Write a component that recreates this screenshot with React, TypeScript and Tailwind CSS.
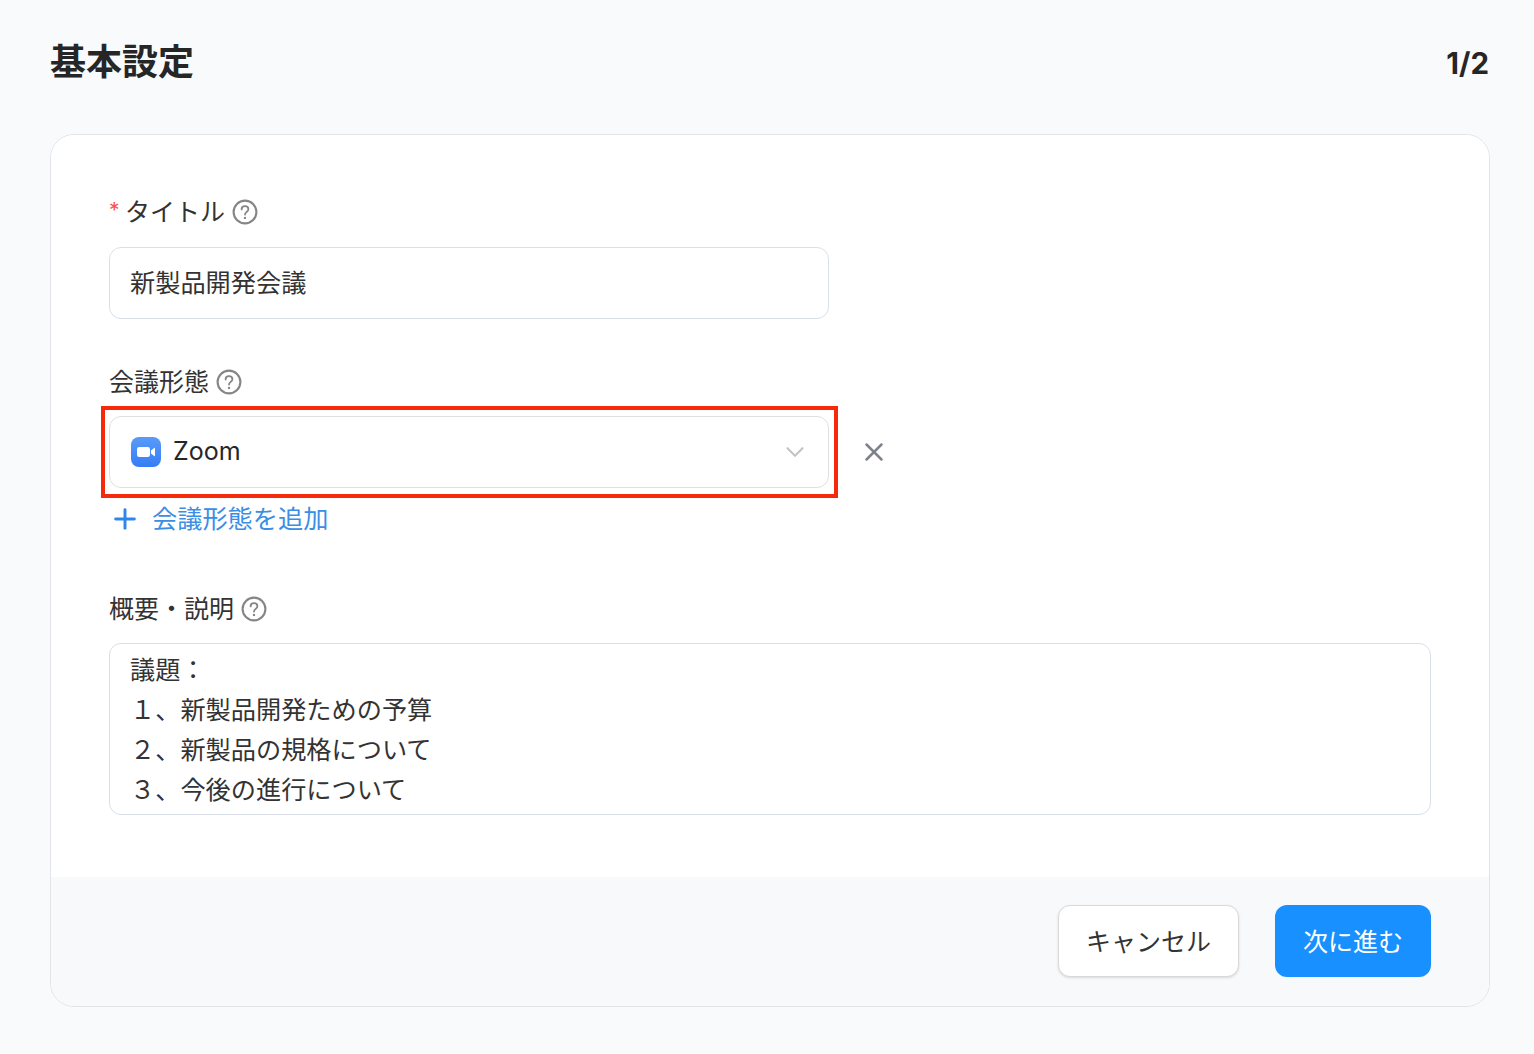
import { ChevronDown, Plus, X } from 'lucide-react';

function HelpIcon() {
  return (
    <svg width="26" height="26" viewBox="0 0 26 26" fill="none" className="shrink-0">
      <circle cx="13" cy="13" r="11.4" stroke="#858585" strokeWidth="2.1" />
      <path
        d="M9.6 10.4c0-1.9 1.5-3.2 3.4-3.2s3.4 1.2 3.4 3c0 2.6-3.4 2.8-3.4 5.4"
        stroke="#858585"
        strokeWidth="1.8"
        strokeLinecap="round"
      />
      <circle cx="13" cy="18.9" r="1.2" fill="#858585" />
    </svg>
  );
}

function ZoomLogo() {
  return (
    <svg width="30" height="30" viewBox="0 0 30 30" className="shrink-0">
      <defs>
        <linearGradient id="zoomBg" x1="0" y1="0" x2="0" y2="1">
          <stop offset="0" stopColor="#5a9bf8" />
          <stop offset="1" stopColor="#357df6" />
        </linearGradient>
      </defs>
      <rect width="30" height="30" rx="8" fill="url(#zoomBg)" />
      <rect x="6" y="10" width="13" height="10" rx="2.2" fill="#fff" />
      <path d="M20 13.6l3.2-2.6c.4-.3.8-.1.8.4v7.2c0 .5-.4.7-.8.4L20 16.4z" fill="#fff" />
    </svg>
  );
}

function FieldLabel({ text, required }: { text: string; required?: boolean }) {
  return (
    <div className="flex h-[36px] items-center gap-[7px] text-[25px] text-[#333]">
      {required && <span className="mb-[4px] w-[9px] text-[21px] leading-none text-[#ff4d4f]">*</span>}
      <span className="pt-[2px]">{text}</span>
      <HelpIcon />
    </div>
  );
}

export default function App() {
  return (
    <div
      className="flex h-[1054px] flex-col bg-[#f9fafb] pl-[50px] pr-[45px] text-[#333]"
      style={{ fontFamily: 'Inter, "Noto Sans CJK JP", sans-serif' }}
    >
      <div className="flex h-[134px] items-start justify-between pt-[38px]">
        <h1 className="text-[36px] font-bold leading-[48px] text-[#262626]">基本設定</h1>
        <span className="pt-[4px] text-[29.5px] font-bold leading-[42px] text-[#262626]">1/2</span>
      </div>

      <div className="mr-[-1px] flex h-[873px] flex-col overflow-hidden rounded-[24px] border border-[#e2e4e9] bg-white">
        <div className="flex h-[742px] flex-col bg-white pl-[58px] pr-[58px] pt-[59px]">
          <FieldLabel text="タイトル" required />
          <div className="mt-[17px] flex h-[72px] w-[720px] items-center rounded-[12px] border border-[#d9dfe8] pl-[20px] pt-[2px] text-[25.2px]">
            新製品開発会議
          </div>

          <div className="mt-[45px]">
            <FieldLabel text="会議形態" />
          </div>
          <div className="mt-[16px] flex items-center">
            <div className="relative flex h-[72px] w-[720px] items-center rounded-[12px] border border-[#e0e0e0] pl-[21px] pr-[18px]">
              <div className="pointer-events-none absolute bottom-[-11px] left-[-9px] right-[-10px] top-[-11px] border-4 border-[#f52a0c]" />
              <ZoomLogo />
              <span className="ml-[12px] flex-1 text-[25px] text-[#262626]">Zoom</span>
              <ChevronDown size={30} strokeWidth={1.7} className="text-[#c4c4c4]" />
            </div>
            <X size={30} strokeWidth={2} className="ml-[30px] text-[#7d828c]" />
          </div>
          <div className="mt-[13px] flex h-[36px] items-center text-[25.2px] text-[#3a8ee6]">
            <Plus size={32} strokeWidth={2.2} className="text-[#2f86ea]" />
            <span className="ml-[11px] pt-[1px]">会議形態を追加</span>
          </div>

          <div className="mt-[54px]">
            <FieldLabel text="概要・説明" />
          </div>
          <div className="mt-[16px] h-[172px] overflow-hidden rounded-[12px] border border-[#d9dfe8] pl-[20px] pt-[6px] text-[25.2px] leading-[40px]">
            <div>議題：</div>
            <div>１、新製品開発ための予算</div>
            <div>２、新製品の規格について</div>
            <div>３、今後の進行について</div>
          </div>
        </div>

        <div className="flex flex-1 items-start justify-end gap-[36px] bg-[#f8f9fb] pr-[58px] pt-[28px]">
          <button className="h-[72px] w-[181px] rounded-[12px] border border-[#d9d9d9] bg-white pt-[3px] text-[25px] text-[#333] shadow-sm">
            キャンセル
          </button>
          <button className="h-[72px] w-[156px] rounded-[12px] bg-[#1890ff] pt-[3px] text-[25px] text-white">
            次に進む
          </button>
        </div>
      </div>
    </div>
  );
}
